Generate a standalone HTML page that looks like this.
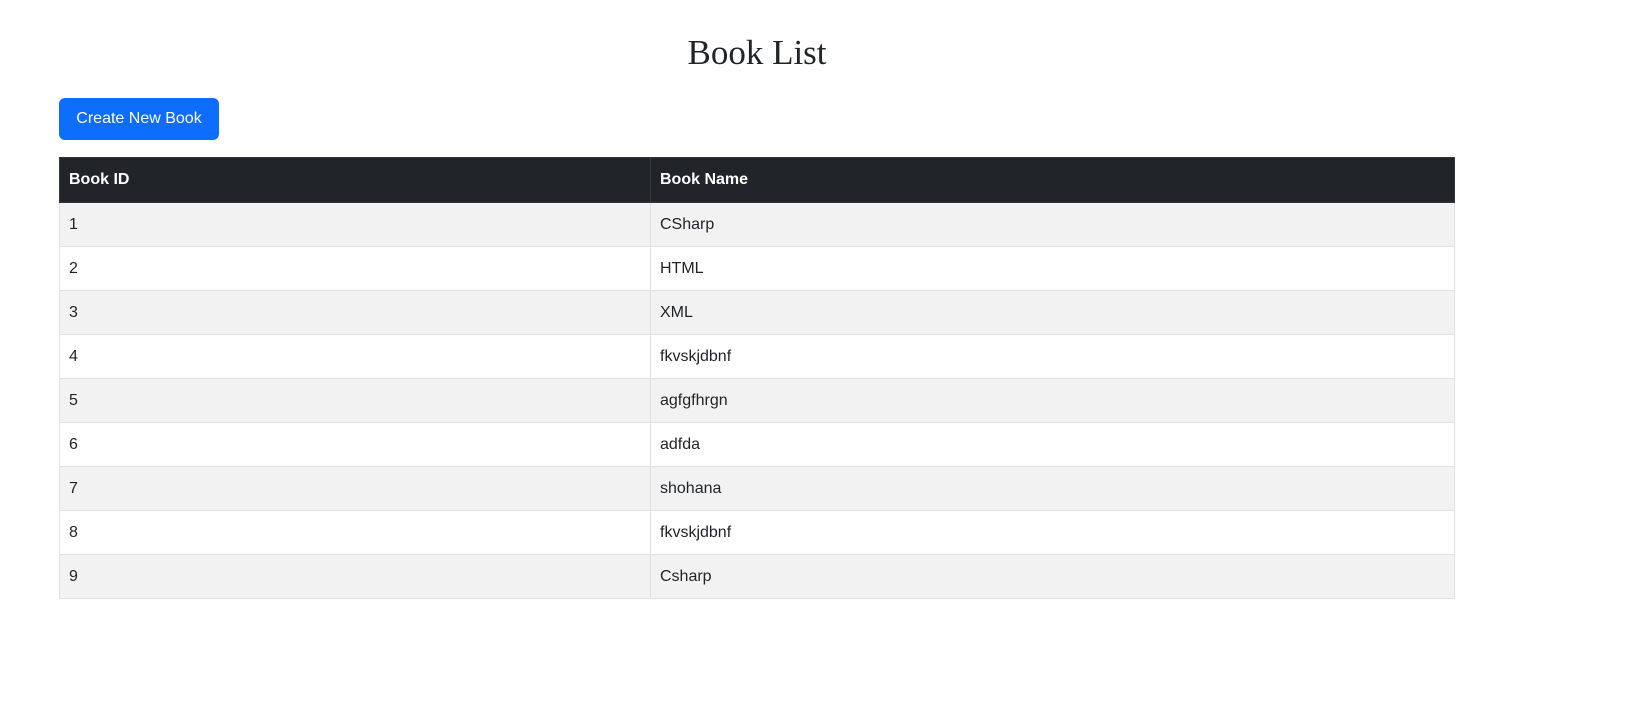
<!DOCTYPE html>
<html><head><style>
body{margin:0;background:#fff;font-family:"Liberation Sans",sans-serif;color:#212529;}
h1{position:absolute;top:32px;left:0;width:1514px;text-align:center;margin:0;font-family:"Liberation Serif",serif;font-weight:normal;font-size:35px;line-height:42px;}
.btn{position:absolute;left:59px;top:98px;width:160px;height:42px;background:#0d6efd;color:#fff;border-radius:6px;font-size:16px;line-height:42px;text-align:center;}
table{position:absolute;left:59px;top:157px;width:1396px;border-collapse:collapse;font-size:16px;}
th,td{height:43px;padding:0 9px;text-align:left;border:1px solid #dee2e6;}
th{background:#212529;color:#fff;border-color:#32383e;height:44px;}
td:first-child,th:first-child{width:572px;}
tr:nth-child(odd) td{background:#f2f2f2;}
</style></head><body>
<h1>Book List</h1>
<div class="btn">Create New Book</div>
<table>
<thead><tr><th>Book ID</th><th>Book Name</th></tr></thead>
<tbody>
<tr><td>1</td><td>CSharp</td></tr>
<tr><td>2</td><td>HTML</td></tr>
<tr><td>3</td><td>XML</td></tr>
<tr><td>4</td><td>fkvskjdbnf</td></tr>
<tr><td>5</td><td>agfgfhrgn</td></tr>
<tr><td>6</td><td>adfda</td></tr>
<tr><td>7</td><td>shohana</td></tr>
<tr><td>8</td><td>fkvskjdbnf</td></tr>
<tr><td>9</td><td>Csharp</td></tr>
</tbody></table>
</body></html>
